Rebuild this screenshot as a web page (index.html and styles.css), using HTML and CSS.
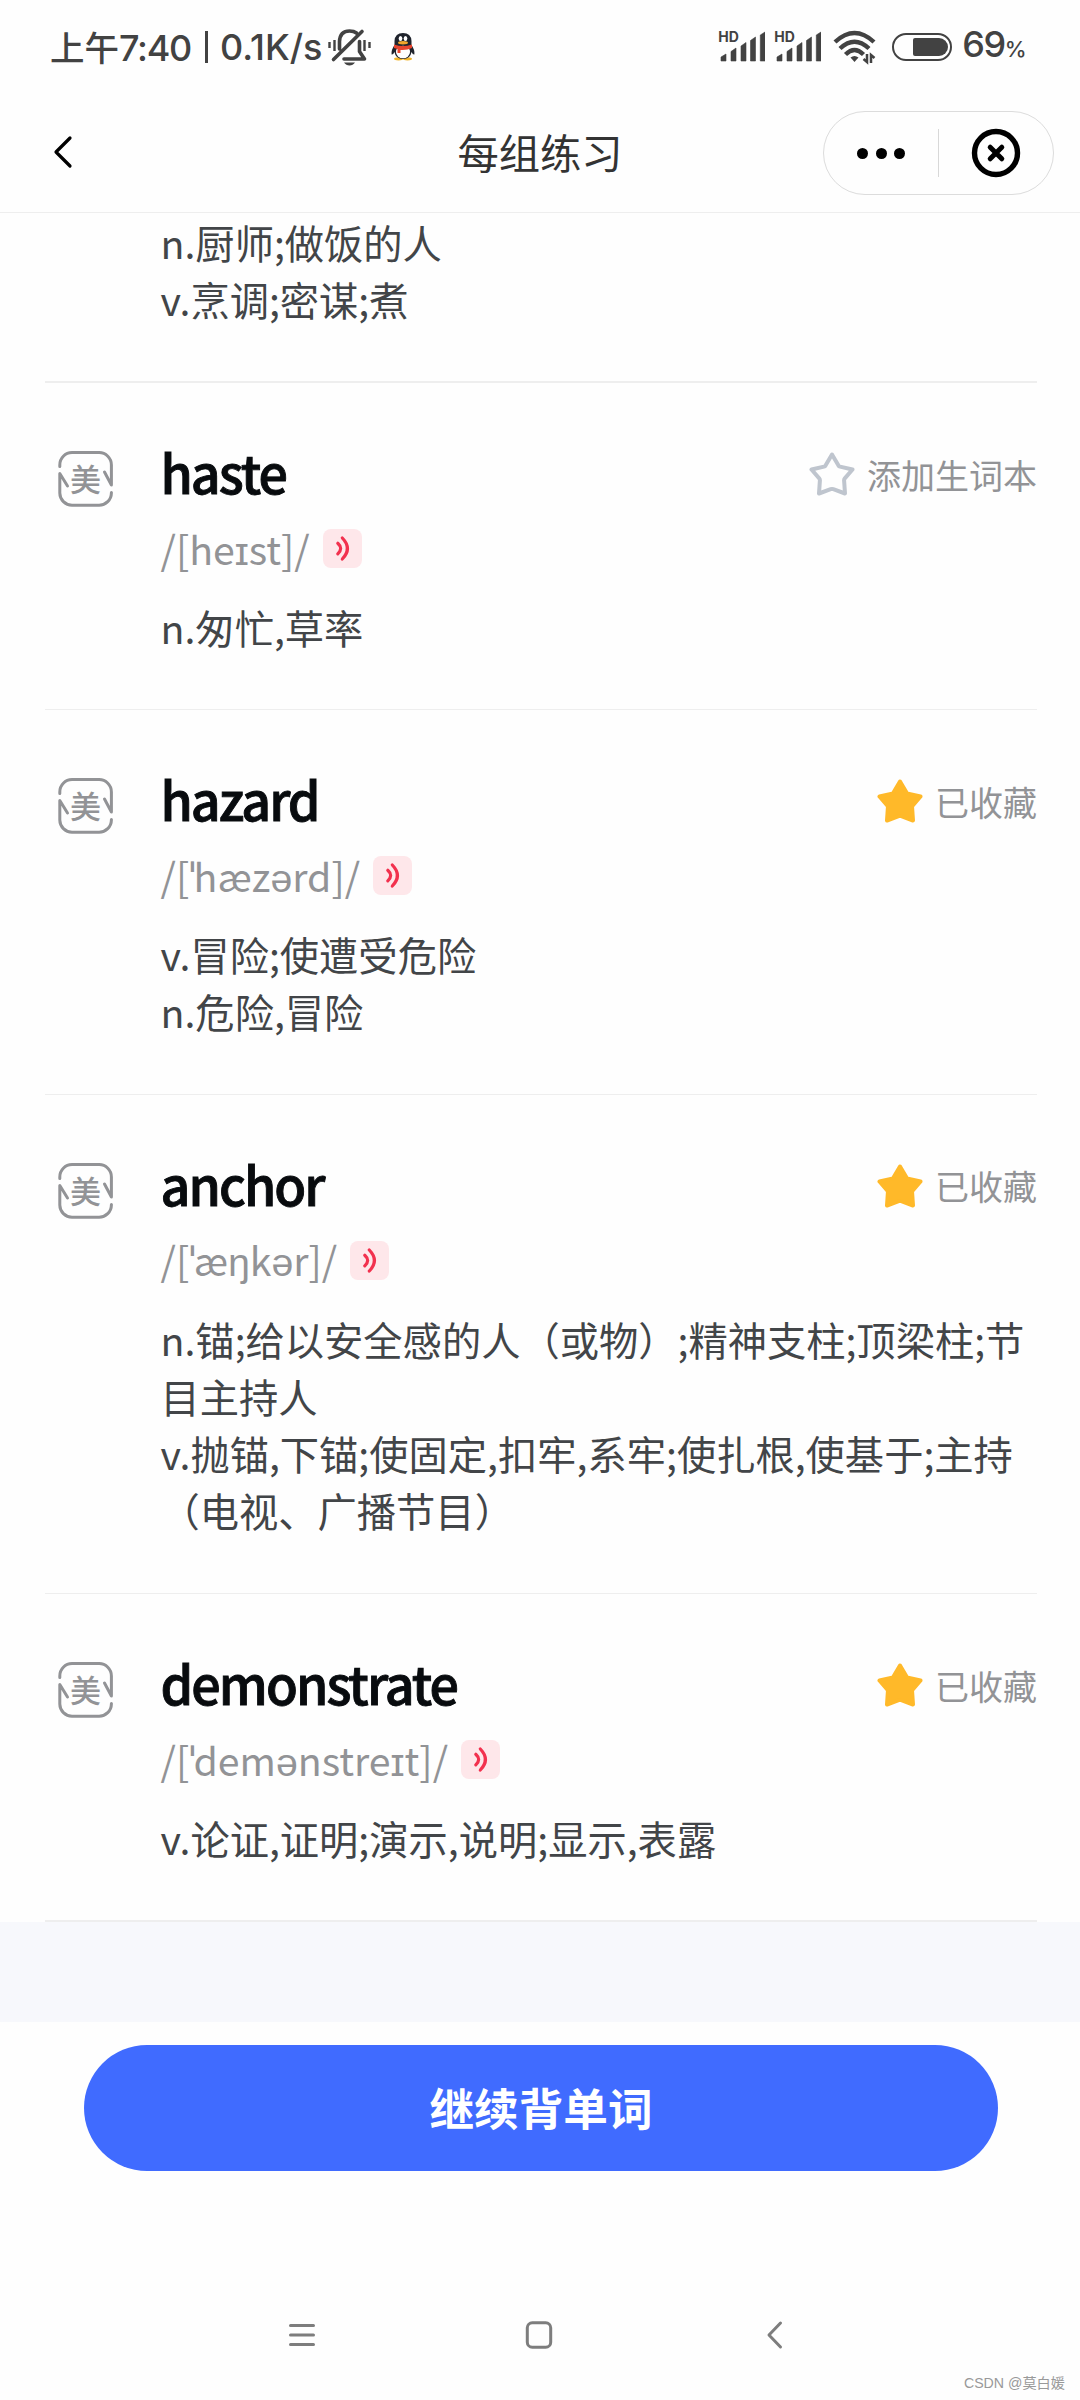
FILE: index.html
```html
<!DOCTYPE html>
<html lang="zh-CN">
<head>
<meta charset="UTF-8">
<meta name="viewport" content="width=device-width, initial-scale=1.0">
<title>每组练习</title>
<link rel="stylesheet" href="styles.css">
</head>
<body>
<svg class="defs" width="0" height="0">
<symbol id="icon-mei" viewBox="0 0 56 56">
<path d="M1.8 15.5V14A12.3 12.3 0 0 1 14 1.6H41A12.3 12.3 0 0 1 53.4 14V34L46.5 21M53.4 41.5V42A12.3 12.3 0 0 1 41 54.2H14A12.3 12.3 0 0 1 1.8 42V22.5L9.5 35" fill="none" stroke="#929396" stroke-width="3" stroke-linejoin="round" stroke-linecap="round"/>
</symbol>
<symbol id="icon-star" viewBox="0 0 46 44">
<path d="M23 2.5L29.5 13.6Q30 14.4 31 14.6L43.5 17.5L35.8 26.4Q35 27.3 35.1 28.5L36 41.5L24.3 37.2Q23 36.7 21.7 37.2L10 41.5L10.9 28.5Q11 27.3 10.2 26.4L2.5 17.5L15 14.6Q16 14.4 16.5 13.6Z" stroke-width="4" stroke-linejoin="round"/>
</symbol>
<symbol id="icon-sound" viewBox="0 0 39 39">
<path d="M14.8 14.3Q20.5 19.5 14.8 24.8M19.3 9Q29.5 19.5 19.3 30" fill="none" stroke="#f2314e" stroke-width="3.2" stroke-linecap="round"/>
</symbol>
<symbol id="icon-signal" viewBox="0 0 46 32">
<path d="M2 30V26L7 23V30ZM12 30V20.5L17 17V30ZM22 30V15L27 11.5V30ZM31.5 30V9.5L36.5 6V30ZM41.3 30V4L46 1V30Z" fill="#424242" stroke="#424242" stroke-width=".6" stroke-linejoin="round"/>
</symbol>
</svg>
<div class="status-bar">
<div class="status-left">
<span class="time"><span class="cn">上午</span>7:40</span>
<span class="bar"></span>
<span class="speed">0.1K/s</span>
<svg class="bell" width="44" height="38" viewBox="0 0 44 38" fill="none" stroke="#424242" stroke-width="3.6">
<path d="M11.5 21V13.5Q12 3 21.5 3Q26 3 28.5 5M5.5 31.5L34 3.5M16 31H36.5L31.5 23.5V13.5" stroke-linejoin="round" stroke-linecap="round"/>
<path d="M16 34.5H27Q25 37.5 21.5 37.5Q18 37.5 16 34.5Z" fill="#424242" stroke="none"/>
<path d="M1.5 14V20M6.5 12V23M36.5 12V23M41.5 14V20" stroke-width="2.4"/>
</svg>
<svg class="penguin" width="24" height="29" viewBox="0 0 24 29">
<ellipse cx="7.5" cy="26.8" rx="4.5" ry="1.6" fill="#f2b52b"/>
<ellipse cx="16.5" cy="26.8" rx="4.5" ry="1.6" fill="#f2b52b"/>
<path d="M3.5 13Q0 18 .6 22.5Q2 23 3.5 20Q4.5 26.8 12 27Q19.5 26.8 20.5 20Q22 23 23.4 22.5Q24 18 20.5 13V9Q20 1 12 1Q4 1 3.5 9Z" fill="#20242d"/>
<ellipse cx="12" cy="20" rx="7" ry="6.3" fill="#fff"/>
<path d="M3 12.5Q12 15.5 21 12.5V16Q16 18.5 9.5 18V21H6.5V17L3 16Z" fill="#e8452f"/>
<ellipse cx="9.5" cy="6.5" rx="1.8" ry="2.5" fill="#fff"/>
<ellipse cx="14.5" cy="6.5" rx="1.8" ry="2.5" fill="#fff"/>
<ellipse cx="12" cy="10.8" rx="5" ry="1.7" fill="#f2a62b"/>
</svg>
</div>
<div class="status-right">
<div class="signal"><span class="hd">HD</span><svg width="46" height="32"><use href="#icon-signal"/></svg></div>
<div class="signal"><span class="hd">HD</span><svg width="46" height="32"><use href="#icon-signal"/></svg></div>
<svg class="wifi" width="44" height="36" viewBox="0 0 44 36" fill="none" stroke="#424242" stroke-width="4.4">
<path d="M2 13Q21.5 -5 41 13M7 19.5Q21.5 6 36 19.5M12.5 25.5Q21.5 16.5 30.5 25.5"/>
<path d="M17.5 28.5Q21.5 25.5 25.5 28.5L21.5 33Z" fill="#424242" stroke="none"/>
<path d="M34 25V33L30.5 30M38 34V26L41.5 29" stroke-width="2.5"/>
</svg>
<div class="battery"><div class="battery-level"></div></div>
<span class="percent">69<small>%</small></span>
</div>
</div>
<header class="navbar">
<svg class="back" width="20" height="34" viewBox="0 0 20 34"><path d="M17 3L3 17L17 31" fill="none" stroke="#000" stroke-width="3.2" stroke-linecap="round" stroke-linejoin="round"/></svg>
<h1 class="title">每组练习</h1>
<div class="capsule">
<div class="capsule-btn"><i class="dot"></i><i class="dot"></i><i class="dot"></i></div>
<div class="capsule-line"></div>
<div class="capsule-btn"><svg width="50" height="50" viewBox="0 0 50 50" fill="none" stroke="#000"><circle cx="25" cy="25" r="21.5" stroke-width="5.4"/><path d="M19.2 19.2L30.8 30.8M30.8 19.2L19.2 30.8" stroke-width="5" stroke-linecap="round"/></svg></div>
</div>
</header>
<main class="word-list">
<section class="word-item first">
<div class="meaning">n.厨师;做饭的人<br>v.烹调;密谋;煮</div>
</section>
<section class="word-item">
<div class="accent"><svg width="56" height="56"><use href="#icon-mei"/></svg><span>美</span></div>
<div class="word-body">
<div class="word-head"><h2>haste</h2><div class="collect"><svg class="star" width="46" height="44"><use href="#icon-star"/></svg>添加生词本</div></div>
<div class="phonetic"><span>/[heɪst]/</span><button class="sound"><svg width="39" height="39"><use href="#icon-sound"/></svg></button></div>
<div class="meaning">n.匆忙,草率</div>
</div>
</section>
<section class="word-item">
<div class="accent"><svg width="56" height="56"><use href="#icon-mei"/></svg><span>美</span></div>
<div class="word-body">
<div class="word-head"><h2>hazard</h2><div class="collect"><svg class="star on" width="46" height="44"><use href="#icon-star"/></svg>已收藏</div></div>
<div class="phonetic"><span>/[<b>ˈ</b>hæzərd]/</span><button class="sound"><svg width="39" height="39"><use href="#icon-sound"/></svg></button></div>
<div class="meaning">v.冒险;使遭受危险<br>n.危险,冒险</div>
</div>
</section>
<section class="word-item">
<div class="accent"><svg width="56" height="56"><use href="#icon-mei"/></svg><span>美</span></div>
<div class="word-body">
<div class="word-head"><h2>anchor</h2><div class="collect"><svg class="star on" width="46" height="44"><use href="#icon-star"/></svg>已收藏</div></div>
<div class="phonetic"><span>/[<b>ˈ</b>æŋkər]/</span><button class="sound"><svg width="39" height="39"><use href="#icon-sound"/></svg></button></div>
<div class="meaning">n.锚;给以安全感的人（或物）;精神支柱;顶梁柱;节<br>目主持人<br>v.抛锚,下锚;使固定,扣牢,系牢;使扎根,使基于;主持<br>（电视、广播节目）</div>
</div>
</section>
<section class="word-item">
<div class="accent"><svg width="56" height="56"><use href="#icon-mei"/></svg><span>美</span></div>
<div class="word-body">
<div class="word-head"><h2>demonstrate</h2><div class="collect"><svg class="star on" width="46" height="44"><use href="#icon-star"/></svg>已收藏</div></div>
<div class="phonetic"><span>/[<b>ˈ</b>demənstreɪt]/</span><button class="sound"><svg width="39" height="39"><use href="#icon-sound"/></svg></button></div>
<div class="meaning">v.论证,证明;演示,说明;显示,表露</div>
</div>
</section>
</main>
<div class="gap"></div>
<footer class="footer">
<button class="continue">继续背单词</button>
</footer>
<nav class="system-nav">
<svg width="28" height="30" viewBox="0 0 28 30"><path d="M2.5 5.5H25.5M2.5 15H25.5M2.5 24.5H25.5"/></svg>
<svg width="28" height="30" viewBox="0 0 28 30"><rect x="2.3" y="2.8" width="23.4" height="24.4" rx="5"/></svg>
<svg width="28" height="30" viewBox="0 0 28 30"><path d="M19.5 3L8 15L19.5 27"/></svg>
</nav>
<div class="watermark">CSDN @莫白媛</div>
</body>
</html>
```

FILE: styles.css
```css
* {
box-sizing: border-box;
}
body {
margin: 0;
width: 1080px;
height: 2400px;
overflow: hidden;
position: relative;
display: flex;
flex-direction: column;
background: #fefefe;
font-family: "Noto Sans CJK SC", sans-serif;
}
.defs {
position: absolute;
}
svg {
display: block;
flex: none;
}
button {
border: none;
padding: 0;
font-family: inherit;
}
.status-bar {
flex: none;
height: 95px;
padding: 0 55px 2px 50px;
display: flex;
justify-content: space-between;
color: #424242;
font-family: Inter, "Noto Sans CJK SC", sans-serif;
font-weight: 500;
font-size: 36px;
line-height: 92px;
}
.status-left,
.status-right {
display: flex;
align-items: center;
white-space: nowrap;
}
.time {
letter-spacing: -1.3px;
}
.cn {
font-family: "Noto Sans CJK SC", sans-serif;
font-size: 34.5px;
letter-spacing: 0;
}
.bar {
width: 3px;
height: 32px;
margin: 0 12px 0 14px;
background: #424242;
}
.speed {
letter-spacing: 0;
}
.bell {
margin-left: 6px;
}
.penguin {
margin-left: 19px;
}
.signal {
position: relative;
margin-right: 10px;
}
.hd {
position: absolute;
left: -1px;
top: -1px;
font-size: 14px;
line-height: 14px;
font-weight: 700;
}
.wifi {
margin-left: 2px;
}
.battery {
width: 60px;
height: 28px;
margin-left: 15px;
padding: 3px 2px;
border: 2.5px solid #424242;
border-radius: 14px;
display: flex;
justify-content: flex-end;
}
.battery-level {
width: 35px;
background: #424242;
border-radius: 2px 9px 9px 2px;
}
.percent {
margin-left: 10px;
letter-spacing: -1.5px;
}
.percent small {
font-size: 22px;
}
.navbar {
flex: none;
height: 118px;
padding: 0 26px;
border-bottom: 1px solid #eee;
display: grid;
grid-template-columns: 1fr auto 1fr;
align-items: center;
}
.back {
margin: 0 0 4px 27px;
}
.title {
margin: 0 0 5px;
font-size: 41.3px;
font-weight: 400;
color: #333;
line-height: 60px;
}
.capsule {
justify-self: end;
width: 231px;
height: 84px;
margin-bottom: 1px;
border: 1px solid #dcdcdc;
border-radius: 42px;
display: flex;
align-items: center;
}
.capsule-btn {
flex: 1;
display: flex;
justify-content: center;
gap: 7.5px;
}
.capsule-line {
width: 1px;
height: 48px;
background: #d8d8d8;
}
.dot {
width: 11px;
height: 11px;
border-radius: 50%;
background: #000;
}
.word-list {
flex: none;
padding: 0 43px 0 45px;
}
.word-item {
height: 327.3px;
border-bottom: 1px solid #eee;
padding: 64px 0 0 13px;
display: flex;
gap: 46.5px;
}
.word-item:nth-child(3) {
height: 384.6px;
}
.word-item:nth-child(4) {
height: 499.2px;
}
.word-item:last-child {
height: 328px;
border-bottom-width: 2px;
}
.word-item.first {
height: 170px;
padding: 0 0 0 115.5px;
border-bottom-width: 2px;
}
.accent {
position: relative;
width: 56px;
height: 56px;
margin-top: 4px;
}
.accent span {
position: absolute;
left: 0;
top: 0;
width: 55px;
font-size: 31px;
font-weight: 500;
line-height: 54px;
text-align: center;
color: #929396;
}
.word-body {
flex: 1;
}
.word-head {
display: flex;
justify-content: space-between;
align-items: center;
height: 56px;
}
h2 {
margin: 0 0 6px;
font-size: 52px;
font-weight: 500;
letter-spacing: -1.95px;
line-height: 56px;
color: #080b0e;
-webkit-text-stroke: .9px #080b0e;
}
.collect {
display: flex;
align-items: center;
gap: 12px;
margin-bottom: 2px;
font-size: 34px;
color: #929396;
white-space: nowrap;
}
.star {
fill: none;
stroke: #bfc5ce;
}
.star.on {
fill: #ffb929;
stroke: #ffb929;
}
.phonetic {
display: flex;
align-items: center;
gap: 13px;
height: 60px;
margin-top: 15.5px;
font-size: 39.27px;
line-height: 58px;
color: #929396;
white-space: nowrap;
}
.phonetic span {
margin-bottom: 2px;
}
.phonetic b {
font-family: "Noto Sans", sans-serif;
font-weight: 400;
letter-spacing: -2px;
line-height: 1;
}
.sound {
width: 39px;
height: 39px;
border-radius: 8px;
background: #fee7ea;
}
.meaning {
font-size: 39.27px;
line-height: 57.2px;
color: #424548;
white-space: nowrap;
}
.word-body .meaning {
margin-top: 19.2px;
}
.gap {
flex: none;
height: 100px;
background: #f7f8fc;
}
.footer {
flex: none;
height: 248px;
padding: 23px 82px 0 84px;
}
.continue {
display: block;
width: 100%;
height: 126px;
padding-bottom: 4px;
border-radius: 63px;
background: #406bff;
color: #fff;
font-size: 44.6px;
font-weight: 700;
}
.system-nav {
flex: 1;
padding: 0 291px 0 288px;
display: flex;
justify-content: space-between;
align-items: center;
}
.system-nav svg {
fill: none;
stroke: #7d7d7d;
stroke-width: 3;
stroke-linecap: round;
stroke-linejoin: round;
}
.watermark {
position: absolute;
right: 15px;
bottom: 6px;
font-family: "Liberation Sans", "Noto Sans CJK SC", sans-serif;
font-size: 14.2px;
line-height: 22px;
color: #999;
}
```
